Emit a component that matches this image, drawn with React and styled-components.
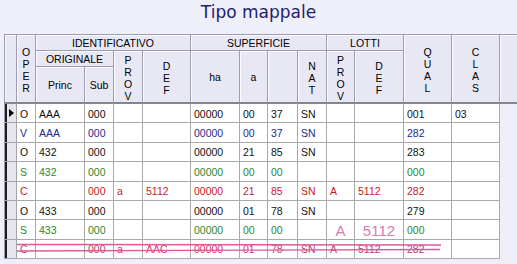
import React from 'react';
import styled, { createGlobalStyle } from 'styled-components';

const GlobalStyle = createGlobalStyle`
  html, body {
    margin: 0;
    padding: 0;
    background: #eeeff9;
  }
  body {
    width: 517px;
    height: 264px;
    overflow: hidden;
    font-family: "Liberation Sans", Arial, sans-serif;
  }
`;

const ROW_COLORS = {
  O: '#111111',
  V: '#222a8e',
  S: '#2e862e',
  C: '#c41a2a',
  X: '#c8386a',
};

const Page = styled.div`
  width: 517px;
  height: 264px;
  display: flex;
  flex-direction: column;
  background: #eeeff9;
  overflow: hidden;
`;

const Title = styled.h1`
  margin: 0;
  height: 34px;
  flex: none;
  font: normal 17px "DejaVu Sans", Verdana, sans-serif;
  line-height: 25px;
  color: #1e1e6e;
  text-align: center;
`;

const Board = styled.div`
  position: relative;
  margin-left: 4px;
`;

const Grid = styled.div`
  display: grid;
  grid-template-columns: 13px 19px 49px 29px 29px 48px 49px 28px 30px 29px 28px 49px 48px 48px 17px;
  grid-template-rows: 16px 16px 37px repeat(8, 19.375px);
  border-top: 1px solid #9c9cae;
`;

const HeadCell = styled.div`
  box-sizing: border-box;
  grid-column: span ${p => p.$cols || 1};
  grid-row: span ${p => p.$rows || 1};
  display: flex;
  align-items: center;
  justify-content: center;
  background: #e8e8f5;
  box-shadow: inset 1px 1px 0 #fbfbff;
  border-left: ${p => (p.$first ? '1px solid #9c9cae' : 'none')};
  border-right: ${p => (p.$open ? 'none' : '1px solid #9c9cae')};
  border-bottom: ${p => (p.$thick ? '2px solid #85858f' : '1px solid #9c9cae')};
  font-size: 10.5px;
  color: #000;
  white-space: nowrap;
`;

const Stack = styled.span`
  display: flex;
  flex-direction: column;
  align-items: center;
  padding-top: 2px;
  line-height: 12px;
`;

const Indicator = styled.div`
  box-sizing: border-box;
  display: flex;
  align-items: center;
  padding-left: 4px;
  background: #e6e6ee;
  border-left: 1px solid #9c9cae;
  box-shadow: inset 2px 0 0 #1e1e1e;
  border-right: 1px solid #a4a4ac;
  border-bottom: 1px solid #a4a4ac;
`;

const Pointer = styled.span`
  width: 0;
  height: 0;
  border-left: 5px solid #000;
  border-top: 4px solid transparent;
  border-bottom: 4px solid transparent;
`;

const Cell = styled.div`
  box-sizing: border-box;
  display: flex;
  align-items: center;
  justify-content: ${p => (p.$big ? 'center' : 'flex-start')};
  padding-left: ${p => (p.$big ? '0' : '3px')};
  padding-top: ${p => (p.$big ? '2px' : '1px')};
  background: #fff;
  border-right: 1px solid #a9a9a9;
  border-bottom: 1px solid #a9a9a9;
  font-size: ${p => (p.$big ? '15px' : '10.5px')};
  color: ${p => (p.$big ? '#e077b0' : p.$color)};
  white-space: nowrap;
  overflow: visible;
`;

const Filler = styled.div``;

const Strike = styled.svg`
  position: absolute;
  left: 0;
  top: 0;
  width: 513px;
  height: 230px;
  pointer-events: none;
`;

const rows = [
  { kind: 'O', current: true, cells: ['O', 'AAA', '000', '', '', '00000', '00', '37', 'SN', '', '', '001', '03'] },
  { kind: 'V', cells: ['V', 'AAA', '000', '', '', '00000', '00', '37', 'SN', '', '', '282', ''] },
  { kind: 'O', cells: ['O', '432', '000', '', '', '00000', '21', '85', 'SN', '', '', '283', ''] },
  { kind: 'S', cells: ['S', '432', '000', '', '', '00000', '00', '00', '', '', '', '000', ''] },
  { kind: 'C', cells: ['C', '', '000', 'a', '5112', '00000', '21', '85', 'SN', 'A', '5112', '282', ''] },
  { kind: 'O', cells: ['O', '433', '000', '', '', '00000', '01', '78', 'SN', '', '', '279', ''] },
  { kind: 'S', cells: ['S', '433', '000', '', '', '00000', '00', '00', '', { t: 'A', big: true }, { t: '5112', big: true }, '000', ''] },
  { kind: 'X', cells: ['C', '', '000', 'a', 'AAC', '00000', '01', '78', 'SN', 'A', '5112', '282', ''] },
];

const Vertical = ({ text }) => (
  <Stack>
    {text.split('').map((ch, i) => (
      <span key={i}>{ch}</span>
    ))}
  </Stack>
);

export default function App() {
  return (
    <Page>
      <GlobalStyle />
      <Title>Tipo mappale</Title>
      <Board>
        <Grid>
          <HeadCell $rows={3} $first $thick />
          <HeadCell $rows={3} $thick><Vertical text="OPER" /></HeadCell>
          <HeadCell $cols={4}>IDENTIFICATIVO</HeadCell>
          <HeadCell $cols={4}>SUPERFICIE</HeadCell>
          <HeadCell $cols={2}>LOTTI</HeadCell>
          <HeadCell $rows={3} $thick><Vertical text="QUAL" /></HeadCell>
          <HeadCell $rows={3} $thick><Vertical text="CLAS" /></HeadCell>
          <HeadCell $rows={3} $thick $open />

          <HeadCell $cols={2}>ORIGINALE</HeadCell>
          <HeadCell $rows={2} $thick><Vertical text="PROV" /></HeadCell>
          <HeadCell $rows={2} $thick><Vertical text="DEF" /></HeadCell>
          <HeadCell $rows={2} $thick>ha</HeadCell>
          <HeadCell $rows={2} $thick>a</HeadCell>
          <HeadCell $rows={2} $thick />
          <HeadCell $rows={2} $thick><Vertical text="NAT" /></HeadCell>
          <HeadCell $rows={2} $thick><Vertical text="PROV" /></HeadCell>
          <HeadCell $rows={2} $thick><Vertical text="DEF" /></HeadCell>

          <HeadCell $thick>Princ</HeadCell>
          <HeadCell $thick>Sub</HeadCell>

          {rows.map((row, r) => (
            <React.Fragment key={r}>
              <Indicator>{row.current && <Pointer />}</Indicator>
              {row.cells.map((c, i) =>
                typeof c === 'object' ? (
                  <Cell key={i} $big>{c.t}</Cell>
                ) : (
                  <Cell key={i} $color={ROW_COLORS[row.kind]}>{c}</Cell>
                )
              )}
              <Filler />
            </React.Fragment>
          ))}
        </Grid>
        <Strike viewBox="0 0 513 230">
          <line x1="13" y1="210.5" x2="437" y2="211" stroke="#dc5a9c" strokeWidth="1.4" />
          <line x1="13" y1="217" x2="436" y2="215.5" stroke="#dc5a9c" strokeWidth="1.4" />
        </Strike>
      </Board>
    </Page>
  );
}
